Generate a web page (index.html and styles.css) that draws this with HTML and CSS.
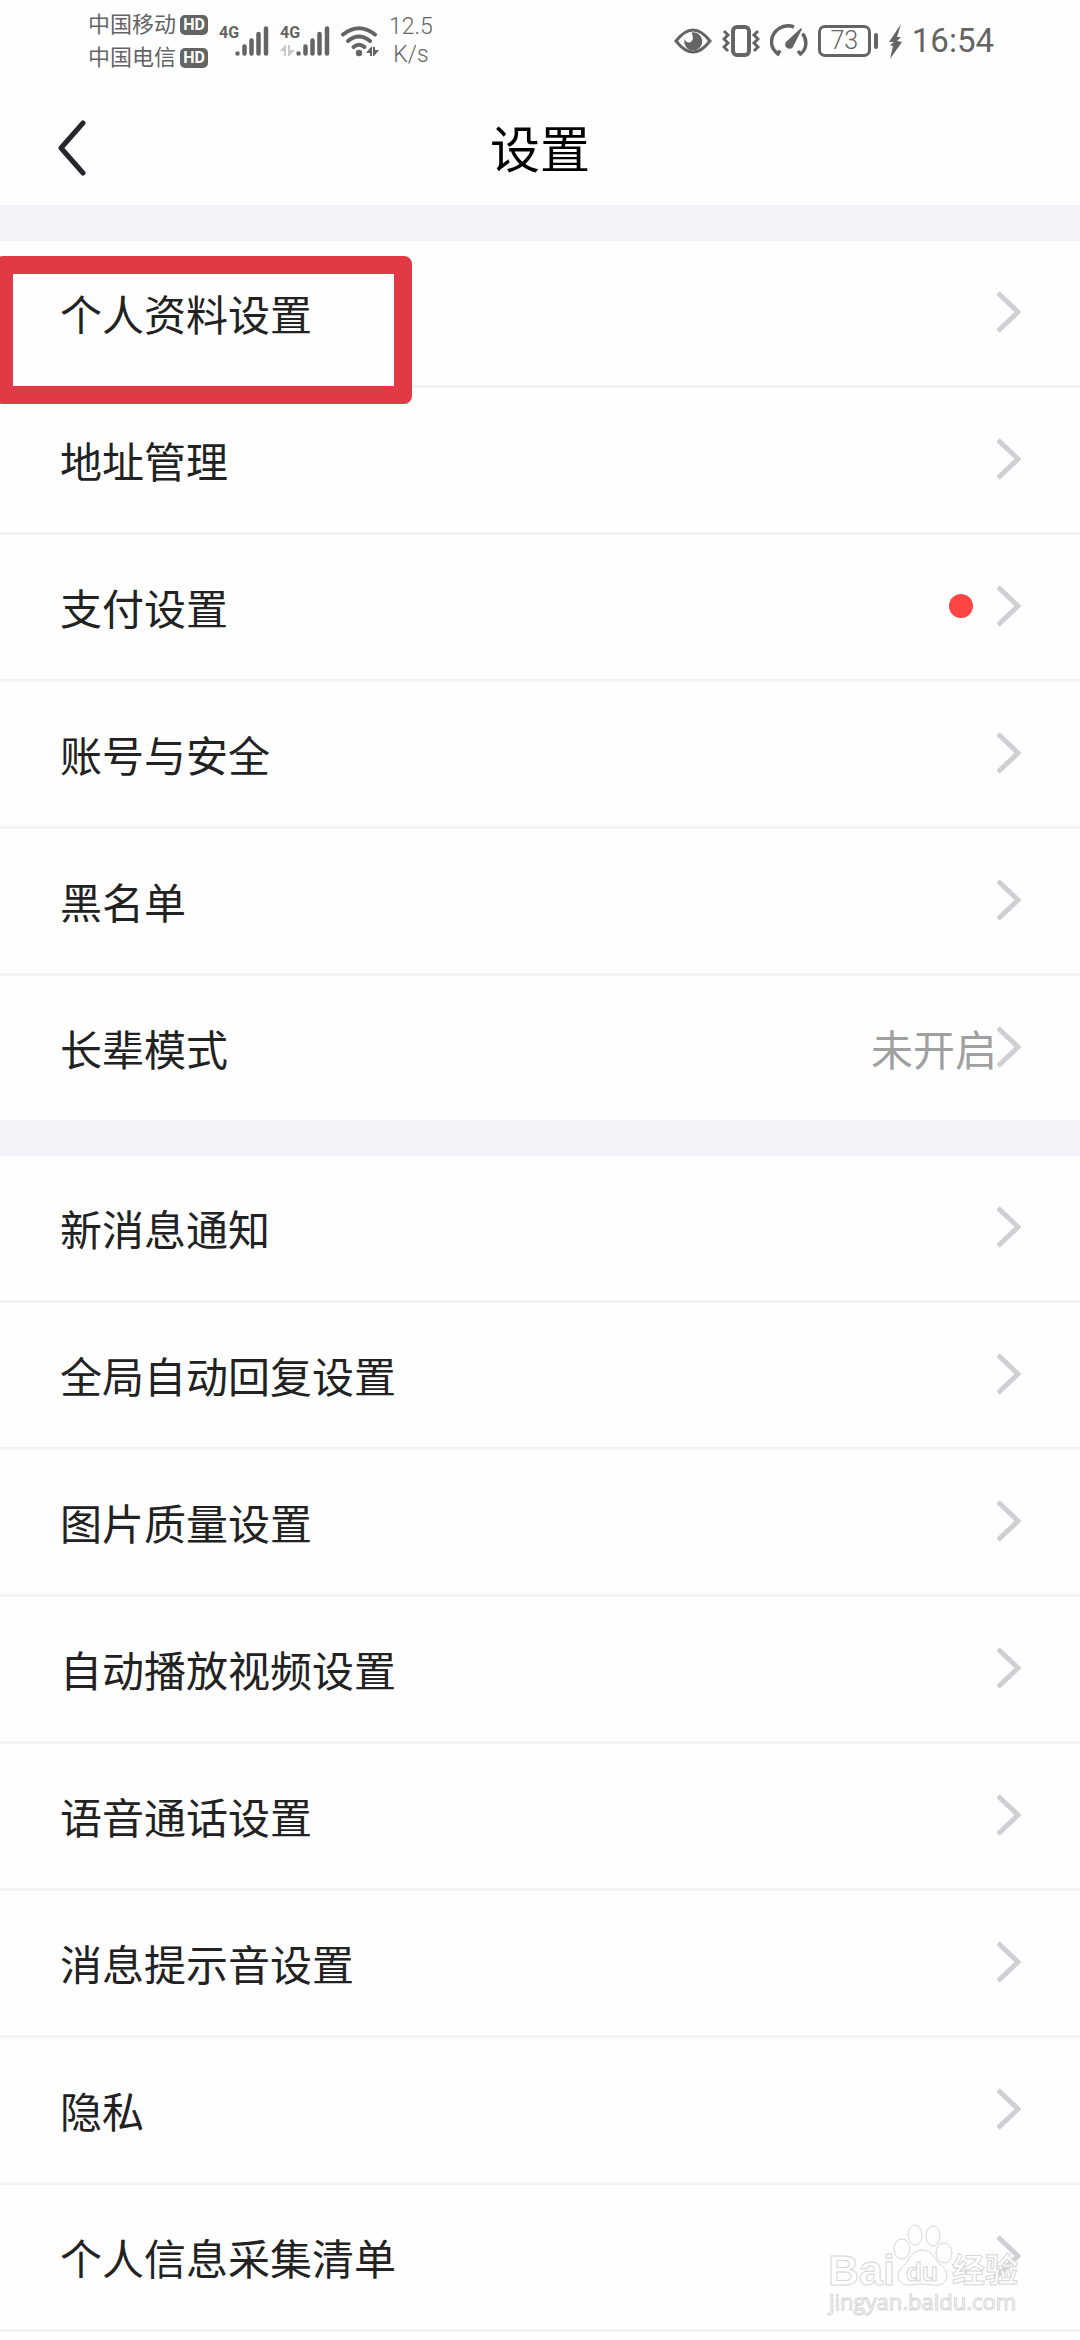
FILE: index.html
```html
<!DOCTYPE html>
<html lang="zh-CN">
<head>
    <meta charset="UTF-8">
    <meta name="viewport" content="width=device-width, initial-scale=1.0">
    <title>设置</title>
    <link rel="stylesheet" href="styles.css">
</head>
<body>
    <!-- Shared icons -->
    <svg class="icon-defs" aria-hidden="true">
        <symbol id="chevron" viewBox="0 0 24 42">
            <path d="M1 2 L21 21 L1 40" fill="none" stroke="#cfd0d3" stroke-width="5"/>
        </symbol>
        <symbol id="bars" viewBox="0 0 34 30">
            <path d="M2.500 27.500v0M9.500 20.500v7M16.500 14.500v13M23.500 8v19.500M31 2.500v25" fill="none" stroke="#646464" stroke-width="4.500" stroke-linecap="round"/>
        </symbol>
    </svg>

    <!-- Status Bar -->
    <div class="status-bar">
        <div class="carriers">
            <div class="carrier">中国移动<span class="hd">HD</span></div>
            <div class="carrier">中国电信<span class="hd">HD</span></div>
        </div>
        <div class="signal">
            <span class="network">4G</span>
            <svg class="bars"><use href="#bars"/></svg>
        </div>
        <div class="signal">
            <span class="network">4G</span>
            <svg class="data" viewBox="0 0 16 11"><path d="M0 6L5 0h1v11H4V6zM8 0h2v5h5L9 11H8z" fill="#c9c9c9"/></svg>
            <svg class="bars"><use href="#bars"/></svg>
        </div>
        <svg class="wifi" viewBox="0 0 38 31">
            <g fill="none" stroke="#646464" stroke-width="4" stroke-linecap="round">
                <path d="M2 8.500Q18 -4 34 8.500"/>
                <path d="M7 15Q18 6 29 15"/>
                <path d="M12.500 21Q18 16.500 23.500 21"/>
            </g>
            <circle cx="18" cy="27" r="3.200" fill="#646464"/>
            <path d="M25 27L30 21h1v9h-2v-3zM32 21h2v3h4l-5 6h-1z" fill="#646464"/>
        </svg>
        <div class="speed">12.5<br>K/s</div>

        <div class="status-right">
            <svg class="eye" viewBox="0 0 38 26">
                <path d="M2 13Q19 -9 36 13Q19 35 2 13Z" fill="none" stroke="#646464" stroke-width="3"/>
                <path d="M17.500 4.500A9 9 0 1 1 10.500 11Q12 15 16 14.500Q21 12 17.500 4.500Z" fill="#646464"/>
            </svg>
            <svg class="vibrate" viewBox="0 0 38 32">
                <rect x="11" y="2" width="16" height="28" rx="4" fill="none" stroke="#646464" stroke-width="4"/>
                <path d="M2 6l4 4-4 4 4 4-4 4 4 4M36 6l-4 4 4 4-4 4 4 4-4 4" fill="none" stroke="#646464" stroke-width="3"/>
            </svg>
            <svg class="gauge" viewBox="0 0 38 34">
                <path d="M10 26.500L8 30Q1.500 25 1.500 18A16.500 16.500 0 0 1 24 3M32.500 9.500Q37.500 16 35 24Q33.500 28 30.500 30L28 27" fill="none" stroke="#646464" stroke-width="3.500"/>
                <path d="M31 4l1 1-9 18a4.300 4.300 0 1 1-7-5z" fill="#646464"/>
            </svg>
            <div class="battery"><span class="level">73</span></div>
            <svg class="bolt" viewBox="0 0 14 35"><path d="M13 0L1 18h5L2 21l3 1L2 35 14 18l-5-1 4-4H9z" fill="#646464"/></svg>
            <span class="time">16:54</span>
        </div>
    </div>

    <!-- Title Bar -->
    <header class="title-bar">
        <button class="back-btn" type="button" aria-label="返回">
            <svg viewBox="0 0 28 56"><path d="M25 3L3 28l22 25" fill="none" stroke="#27262b" stroke-width="5" stroke-linecap="round" stroke-linejoin="round"/></svg>
        </button>
        <h1>设置</h1>
    </header>

    <!-- Settings -->
    <main>
        <ul class="group">
            <li><a class="row marked" href="#">个人资料设置<svg class="chevron"><use href="#chevron"/></svg></a></li>
            <li><a class="row" href="#">地址管理<svg class="chevron"><use href="#chevron"/></svg></a></li>
            <li><a class="row" href="#">支付设置<span class="dot"></span><svg class="chevron"><use href="#chevron"/></svg></a></li>
            <li><a class="row" href="#">账号与安全<svg class="chevron"><use href="#chevron"/></svg></a></li>
            <li><a class="row" href="#">黑名单<svg class="chevron"><use href="#chevron"/></svg></a></li>
            <li><a class="row" href="#">长辈模式<span class="value">未开启</span><svg class="chevron"><use href="#chevron"/></svg></a></li>
        </ul>
        <ul class="group">
            <li><a class="row" href="#">新消息通知<svg class="chevron"><use href="#chevron"/></svg></a></li>
            <li><a class="row" href="#">全局自动回复设置<svg class="chevron"><use href="#chevron"/></svg></a></li>
            <li><a class="row" href="#">图片质量设置<svg class="chevron"><use href="#chevron"/></svg></a></li>
            <li><a class="row" href="#">自动播放视频设置<svg class="chevron"><use href="#chevron"/></svg></a></li>
            <li><a class="row" href="#">语音通话设置<svg class="chevron"><use href="#chevron"/></svg></a></li>
            <li><a class="row" href="#">消息提示音设置<svg class="chevron"><use href="#chevron"/></svg></a></li>
            <li><a class="row" href="#">隐私<svg class="chevron"><use href="#chevron"/></svg></a></li>
            <li class="last"><a class="row" href="#">个人信息采集清单<svg class="chevron"><use href="#chevron"/></svg></a>
                <svg class="watermark" viewBox="0 0 200 100">
                    <g class="outline">
                        <text class="wm-brand" x="2" y="65">Bai</text>
                        <ellipse cx="76" cy="29" rx="8" ry="10"/>
                        <ellipse cx="89" cy="15" rx="7" ry="10"/>
                        <ellipse cx="107" cy="16" rx="7" ry="10"/>
                        <ellipse cx="118" cy="33" rx="8" ry="10"/>
                        <path d="M96 30C86 30 84 40 77 46C67 55 73 67 85 65Q96 63 108 65C121 67 125 54 116 46C108 40 107 30 96 30Z"/>
                        <text class="wm-du" x="80" y="61">du</text>
                        <text class="wm-cjk" x="126" y="62">经验</text>
                        <text class="wm-url" x="3" y="90">jingyan.baidu.com</text>
                    </g>
                </svg>
            </li>
        </ul>
    </main>
</body>
</html>
```
FILE: styles.css
```css
body {
    font-family: Roboto, "Noto Sans CJK SC", sans-serif;
    background-color: #fefefe;
    color: #222;
    margin: 0;
    padding: 0;
}

.icon-defs {
    position: absolute;
    width: 0;
    height: 0;
}

/* Status Bar */
.status-bar {
    display: flex;
    align-items: center;
    box-sizing: border-box;
    height: 90px;
    padding: 0 86px 8px 88px;
    color: #646464;
}

.carriers {
    margin-right: 11px;
}

.carrier {
    display: flex;
    align-items: center;
    gap: 4px;
    font-size: 22px;
    line-height: 33px;
}

.hd {
    width: 28px;
    border-radius: 5px;
    background-color: #646464;
    color: #fff;
    font-size: 16px;
    font-weight: bold;
    line-height: 20px;
    text-align: center;
}

.signal {
    position: relative;
    width: 50px;
    height: 30px;
    margin-right: 11px;
}

.network {
    position: absolute;
    top: 0;
    left: 0;
    font-size: 16px;
    font-weight: bold;
    line-height: 14px;
}

.bars {
    position: absolute;
    right: 0;
    bottom: 0;
    width: 34px;
    height: 30px;
}

.data {
    position: absolute;
    left: 0;
    bottom: 0;
    width: 16px;
    height: 11px;
}

.wifi {
    width: 38px;
    height: 31px;
    margin-right: 10px;
}

.speed {
    font-size: 23px;
    font-weight: 300;
    line-height: 28px;
    text-align: center;
}

.status-right {
    display: flex;
    align-items: center;
    gap: 10px;
    margin-left: auto;
}

.eye {
    width: 38px;
    height: 26px;
}

.vibrate {
    width: 38px;
    height: 32px;
}

.gauge {
    width: 38px;
    height: 34px;
}

.battery {
    display: flex;
    align-items: center;
    gap: 3px;
}

.level {
    width: 47px;
    border: 3px solid #646464;
    border-radius: 7px;
    font-size: 25px;
    font-weight: 300;
    line-height: 26px;
    text-align: center;
}

.battery::after {
    content: "";
    width: 4px;
    height: 16px;
    border-radius: 2px;
    background-color: #646464;
}

.bolt {
    width: 14px;
    height: 35px;
}

.time {
    font-size: 33px;
    line-height: 40px;
}

/* Title Bar */
.title-bar {
    display: grid;
    grid-template-columns: 1fr auto 1fr;
    align-items: center;
    height: 115px;
    padding: 0 58px;
}

.back-btn {
    justify-self: start;
    padding: 0;
    border: none;
    background: none;
    cursor: pointer;
}

.back-btn svg {
    display: block;
    width: 28px;
    height: 56px;
}

h1 {
    margin: 0;
    padding-top: 6px;
    color: #000;
    font-size: 50px;
    font-weight: normal;
    line-height: 60px;
}

/* Settings */
.group {
    margin: 0;
    padding: 0;
    border-top: 36px solid #f3f4f9;
    list-style: none;
}

.row {
    position: relative;
    display: flex;
    align-items: center;
    height: 142px;
    padding: 0 59px 2px 60px;
    border-bottom: 3px solid #f3f4f6;
    color: #222;
    font-size: 42px;
    text-decoration: none;
}

.group:first-child li:last-child .row {
    border-bottom: none;
}

.chevron {
    width: 24px;
    height: 42px;
    margin-left: auto;
}

.dot {
    width: 24px;
    height: 24px;
    margin-left: auto;
    border-radius: 50%;
    background-color: #ff4444;
}

.dot + .chevron {
    margin-left: 24px;
}

.value {
    margin-left: auto;
    color: #a0a0a0;
}

.value + .chevron {
    margin-left: 0;
}

/* Red frame over the first row */
.marked::after {
    content: "";
    position: absolute;
    top: 15px;
    left: -5px;
    width: 381px;
    height: 112px;
    border: 18px solid #e23a44;
    border-radius: 8px;
}

.last {
    position: relative;
}

.watermark {
    position: absolute;
    right: 54px;
    bottom: 12px;
    width: 200px;
    height: 100px;
}

.outline {
    fill: #fefefe;
    fill-opacity: 0.8;
    stroke: #d6d6d6;
    stroke-width: 1px;
}

.wm-brand {
    font-family: "Liberation Sans", sans-serif;
    font-size: 43px;
    font-weight: bold;
}

.wm-du {
    font-family: "Liberation Sans", sans-serif;
    font-size: 26px;
    font-weight: bold;
}

.wm-cjk {
    font-family: "Noto Sans CJK SC", sans-serif;
    font-size: 33px;
    font-weight: bold;
}

.wm-url {
    font-family: "Open Sans", sans-serif;
    font-size: 22px;
}
```
